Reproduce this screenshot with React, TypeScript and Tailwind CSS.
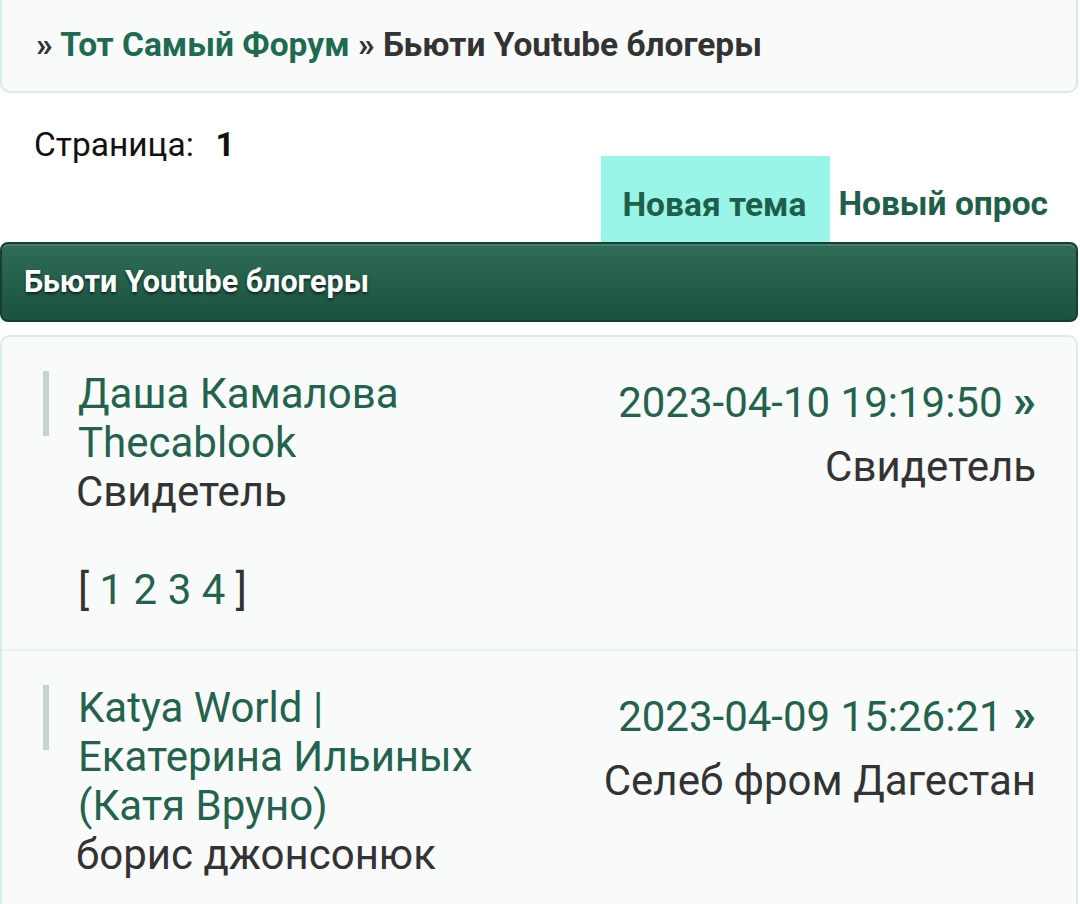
import React from "react";

const topics = [
  {
    title: ["Даша Камалова", "Thecablook"],
    author: "Свидетель",
    pages: ["1", "2", "3", "4"],
    date: "2023-04-10 19:19:50",
    last: "Свидетель",
  },
  {
    title: ["Katya World |", "Екатерина Ильиных", "(Катя Вруно)"],
    author: "борис джонсонюк",
    pages: [],
    date: "2023-04-09 15:26:21",
    last: "Селеб фром Дагестан",
  },
];

const TopicRow = ({ topic, first }: { topic: (typeof topics)[number]; first: boolean }) => {
  return (
    <div className={`flex pl-[41px] pr-[40px] pt-[32px] pb-[35px] ${first ? "" : "border-t-2 border-[#e6f3ee]"}`}>
      <div className="w-[6px] h-[65px] mt-[2px] bg-[#c3d5c9] shrink-0" />
      <div className="w-[430px] pl-[29px] shrink-0 leading-[49px]">
        <a className="block text-[#23634d]">
          {topic.title.map((line) => (
            <span key={line} className="block">
              {line}
            </span>
          ))}
        </a>
        <div className="text-[#333333] -ml-[2px]">{topic.author}</div>
        {topic.pages.length > 0 && (
          <div className="mt-[49px] text-[#333333]">
            [ {topic.pages.map((p) => (
              <a key={p} className="text-[#23634d]">
                {p}{" "}
              </a>
            ))}]
          </div>
        )}
      </div>
      <div className="flex-1 flex flex-col items-end pt-[9px] leading-[49px]">
        <div className="text-[#23634d] whitespace-nowrap">
          {topic.date} <b className="font-bold text-[46px] leading-[40px]">»</b>
        </div>
        <div className="mt-[15px] text-[#333333] whitespace-nowrap">{topic.last}</div>
      </div>
    </div>
  );
};

const App = () => {
  return (
    <div className="min-h-screen bg-white font-['Roboto','Liberation_Sans',sans-serif] text-[#333333] overflow-hidden">
      <div className="h-[93px] mr-[2px] flex items-center px-[34px] bg-[#f9fbfa] border-x-2 border-b-2 border-[#d6ede2] rounded-b-[10px] text-[33.5px] font-bold text-[#333333]">
        <span className="-mt-[1px]">
          » <a className="text-[#1f6b52]">Тот Самый Форум</a> » Бьюти Youtube блогеры
        </span>
      </div>

      <div className="pt-[32px] pl-[34px] text-[33.5px] leading-[40px] text-[#111111]">
        Страница:&nbsp; <b className="font-bold ml-[5px]">1</b>
      </div>

      <div className="relative z-0 flex justify-end items-center pr-[32px] mt-[-9px] -mb-[12px] text-[33.5px] font-bold text-[#1e5f4a]">
        <a className="h-[98px] flex items-center pl-[21px] pr-[24px] bg-[#99f5e8]">Новая тема</a>
        <a className="ml-[8px] h-[98px] flex items-center pb-[2px]">Новый опрос</a>
      </div>

      <div className="relative z-10 h-[80px] mr-[2px] flex items-center pl-[22px] rounded-[8px] border-2 border-[#14402f] bg-gradient-to-b from-[#2f6c57] to-[#1a533f] shadow-[inset_0_2px_0_rgba(255,255,255,0.12)] text-[30.5px] font-bold text-white [text-shadow:0_2px_3px_rgba(0,0,0,0.6)]">
        Бьюти Youtube блогеры
      </div>

      <div className="mt-[13px] mr-[2px] bg-[#f9fbfa] border-2 border-[#d9efe5] rounded-[10px] text-[42px]">
        {topics.map((t, i) => (
          <TopicRow key={t.date} topic={t} first={i === 0} />
        ))}
      </div>
    </div>
  );
};

export default App;
